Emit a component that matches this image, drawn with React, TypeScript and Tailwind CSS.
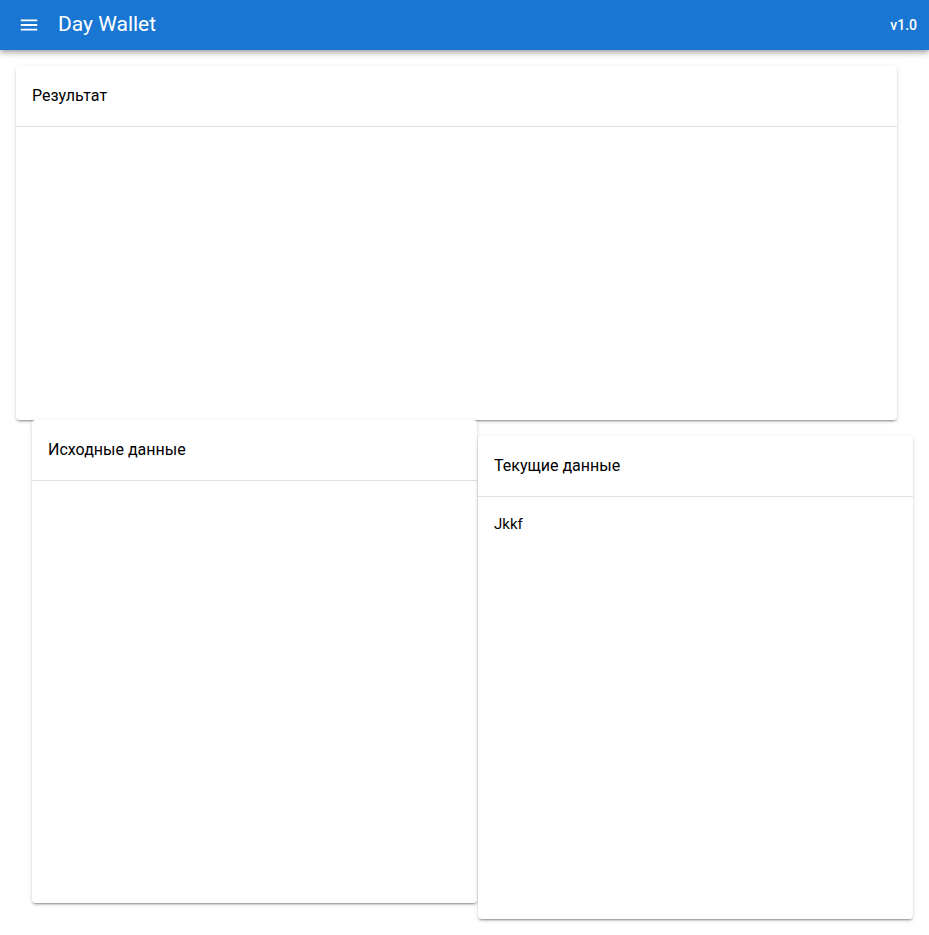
import type { ReactNode } from 'react';

function Card({ title, className, children }: { title: string; className: string; children?: ReactNode }) {
  return (
    <div
      className={`flex flex-col rounded bg-white shadow-[0_3px_1px_-2px_rgba(0,0,0,0.2),0_2px_2px_0_rgba(0,0,0,0.14),0_1px_5px_0_rgba(0,0,0,0.12)] ${className}`}
    >
      <div className="flex h-[60px] items-center px-4 text-[16px] text-black">{title}</div>
      <div className="border-t border-[#e0e0e0]" />
      <div className="px-4 py-4 text-[15px] text-black">{children}</div>
    </div>
  );
}

export default function App() {
  return (
    <div className="min-h-[935px] bg-white font-['Roboto',sans-serif]">
      {/* App bar */}
      <header className="relative z-10 flex h-[50px] items-center bg-[#1976d2] pl-[18px] pr-3 text-white shadow-[0_2px_4px_-1px_rgba(0,0,0,0.2),0_4px_5px_0_rgba(0,0,0,0.14),0_1px_10px_0_rgba(0,0,0,0.12)]">
        <svg className="h-[22px] w-[22px]" viewBox="0 0 24 24" fill="white">
          <path d="M3 6h18v2H3V6m0 5h18v2H3v-2m0 5h18v2H3v-2z" />
        </svg>
        <span className="ml-[18px] text-[21px] font-normal">Day Wallet</span>
        <span className="ml-auto text-[14px] font-medium">v1.0</span>
      </header>

      {/* Result */}
      <div className="pt-4">
        <Card title="Результат" className="ml-4 h-[354px] w-[881px]" />
      </div>

      {/* Data cards */}
      <div className="flex items-start">
        <Card title="Исходные данные" className="ml-8 h-[483px] w-[445px]" />
        <Card title="Текущие данные" className="ml-px mt-4 h-[483px] w-[435px]">
          Jkkf
        </Card>
      </div>
    </div>
  );
}
